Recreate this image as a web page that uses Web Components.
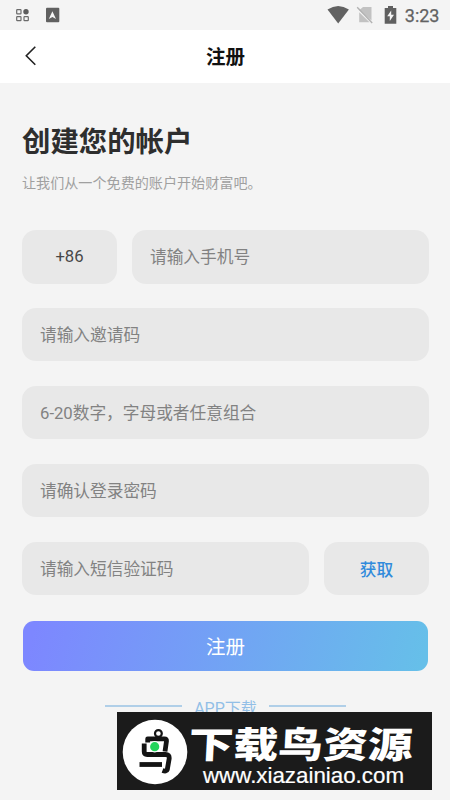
<!DOCTYPE html>
<html lang="zh-CN">
<head>
<meta charset="utf-8">
<title>注册</title>
<style>
html,body{margin:0;height:100%;background:#f4f4f4}
body{font-family:Roboto,"Noto Sans CJK SC",sans-serif}
</style>
</head>
<body>
<register-page></register-page>
<script>
const define = (name, html) => {
  const t = document.createElement('template');
  t.innerHTML = html;
  customElements.define(name, class extends HTMLElement {
    constructor() {
      super();
      this.attachShadow({mode: 'open'}).append(t.content.cloneNode(true));
    }
  });
};

define('status-bar', `
<style>
:host{display:flex;align-items:center;justify-content:space-between;height:30px;box-sizing:border-box;padding:0 10.5px 0 15px;background:#f4f4f4;color:#626262}
div{display:flex;align-items:center}
svg{display:block}
.time{font-size:18px;line-height:30px;margin-left:8px;padding-top:2px;-webkit-text-stroke:.25px #626262}
</style>
<div>
<svg width="46" height="30" viewBox="0 0 46 30">
<g fill="none" stroke="#6b6b6b" stroke-width="1.2"><rect x="1.7" y="9.6" width="4.3" height="4.3" rx=".6"/><rect x="1.7" y="16.6" width="4.3" height="4" rx=".6"/><rect x="9" y="16.6" width="4.3" height="4" rx=".6"/></g>
<circle cx="11" cy="11.7" r="2.7" fill="#5c5c5c"/>
<rect x="31" y="7.7" width="13.3" height="14.5" rx="1" fill="#606060"/>
<path d="M37.4 11.2 33.8 19 37.4 17.1 41 19Z" fill="#f4f4f4"/>
</svg>
</div>
<div>
<svg width="70" height="30" viewBox="327.500 0 70 30">
<path d="M328 9.5Q338.700 2.400 349.400 9.500L338.700 23.500Z" fill="#626262"/>
<path d="M363.500 7H372V20.500L359.700 10.200Z M359.700 12.200 370 22.200H359.700Z" fill="#c2c2c2"/>
<path d="M357.700 7.300 372.700 23" stroke="#b2b2b2" stroke-width="1.400"/>
<path d="M388.500 6H393.500V7.900H396.800V23.800H385.200V7.900H388.500Z" fill="#606060"/>
<path d="M391.700 10.500 387.700 16.300H390.300V21L394.500 14.800H391.700Z" fill="#f4f4f4"/>
</svg>
<span class="time">3:23</span>
</div>`);

define('nav-bar', `
<style>
:host{display:grid;grid-template-columns:60px 1fr 60px;align-items:center;height:52.5px;background:#fff;color:#111}
svg{display:block}
h1{margin:0;padding:4px 0 0 1px;font-size:19.5px;line-height:28px;font-weight:700;text-align:center}
</style>
<svg width="60" height="52" viewBox="0 0 60 52"><path d="M35.300 16.700 26.300 25.700 35.300 34.700" fill="none" stroke="#222" stroke-width="1.600"/></svg>
<h1><slot></slot></h1>`);

define('page-intro', `
<style>
:host{display:block}
h2{margin:0;font-size:28.400px;line-height:40px;font-weight:700;color:#2e2e2e;white-space:nowrap}
p{margin:9px 0 0;font-size:14.100px;line-height:22px;color:#a0a0a0;white-space:nowrap}
</style>
<h2><slot name="title"></slot></h2><p><slot></slot></p>`);

define('field-row', `
<style>:host{display:flex;height:53.500px;margin-bottom:24.400px}</style><slot></slot>`);

define('form-box', `
<style>
:host{display:flex;align-items:center;flex:1;box-sizing:border-box;padding:0 18px 1px;border-radius:14px;background:#e8e8e8;color:#828282;font-size:16.700px;white-space:nowrap}
:host([kind=code]){flex:0 0 95px;justify-content:center;padding:0 0 1px;margin-right:15px;color:#484848}
:host([kind=get]){flex:0 0 105px;justify-content:center;padding:1px 0 0;margin-left:15px;color:#318bdc;font-weight:500}
</style><slot></slot>`);

define('submit-button', `
<style>
:host{display:block;margin:25.500px 1px 0}
button{display:block;width:100%;height:50.500px;border:0;border-radius:11px;padding:0 0 1px;font:19.500px Roboto,"Noto Sans CJK SC",sans-serif;color:#fff;background:linear-gradient(105deg,#7d87ff 3%,#66bfe9 98%)}
</style><button><slot></slot></button>`);

define('download-link', `
<style>
:host{display:flex;align-items:center;justify-content:center;gap:12px;height:24px;margin-top:23px;font-size:16px;color:#92bfe7}
i{width:77.500px;height:2px;background:#b0cfe8}
span{padding-top:1px}
</style><i></i><span><slot></slot></span><i></i>`);

define('site-badge', `
<style>
:host{position:absolute;left:117px;top:712px;width:315px;height:78px;background:#1b1b1b}
svg{display:block}
</style>
<svg width="315" height="78" viewBox="117 712 315 78">
<circle cx="155" cy="752" r="32.300" fill="#fff"/>
<g fill="none" stroke="#141414" stroke-width="4.800" stroke-linejoin="round">
<circle cx="158.400" cy="733.500" r="3.400" stroke-width="2.200"/>
<path d="M147.700 742.500V738.800H164.500Q166.700 738.800 166.500 741L165 751.500"/>
<path d="M144.200 743.500V751.500Q144.200 754.500 147.200 754.500H165.500Q169.500 754.500 169.200 758.500L167.300 769.500Q166.500 772 162.500 770.500"/>
<path d="M139.500 764.500H162"/>
</g>
<circle cx="154.700" cy="746.700" r="5.700" fill="#fff"/>
<circle cx="154.700" cy="746.700" r="4.600" fill="#24d45c"/>
<g fill="#fff">
<text transform="translate(188 758.300) skewX(-3) scale(1 1.040)" font-family="Noto Sans CJK SC,sans-serif" font-weight="900" font-size="35" textLength="224" lengthAdjust="spacingAndGlyphs">下载鸟资源</text>
<text x="203" y="782.500" font-family="Liberation Sans,sans-serif" font-size="21.500" textLength="201" lengthAdjust="spacingAndGlyphs" stroke="#fff" stroke-width=".2">www.xiazainiao.com</text>
</g>
</svg>`);

define('register-page', `
<style>
:host{display:block;position:relative;width:450px;height:800px;overflow:hidden;background:#f4f4f4}
main{padding:40px 21px 0 22px}
form{margin-top:36.500px}
</style>
<status-bar></status-bar>
<nav-bar>注册</nav-bar>
<main>
<page-intro><span slot="title">创建您的帐户</span>让我们从一个免费的账户开始财富吧。</page-intro>
<form>
<field-row><form-box kind="code">+86</form-box><form-box>请输入手机号</form-box></field-row>
<field-row><form-box>请输入邀请码</form-box></field-row>
<field-row><form-box>6-20数字，字母或者任意组合</form-box></field-row>
<field-row><form-box>请确认登录密码</form-box></field-row>
<field-row><form-box>请输入短信验证码</form-box><form-box kind="get">获取</form-box></field-row>
<submit-button>注册</submit-button>
<download-link>APP下载</download-link>
</form>
</main>
<site-badge></site-badge>`);
</script>
</body>
</html>
